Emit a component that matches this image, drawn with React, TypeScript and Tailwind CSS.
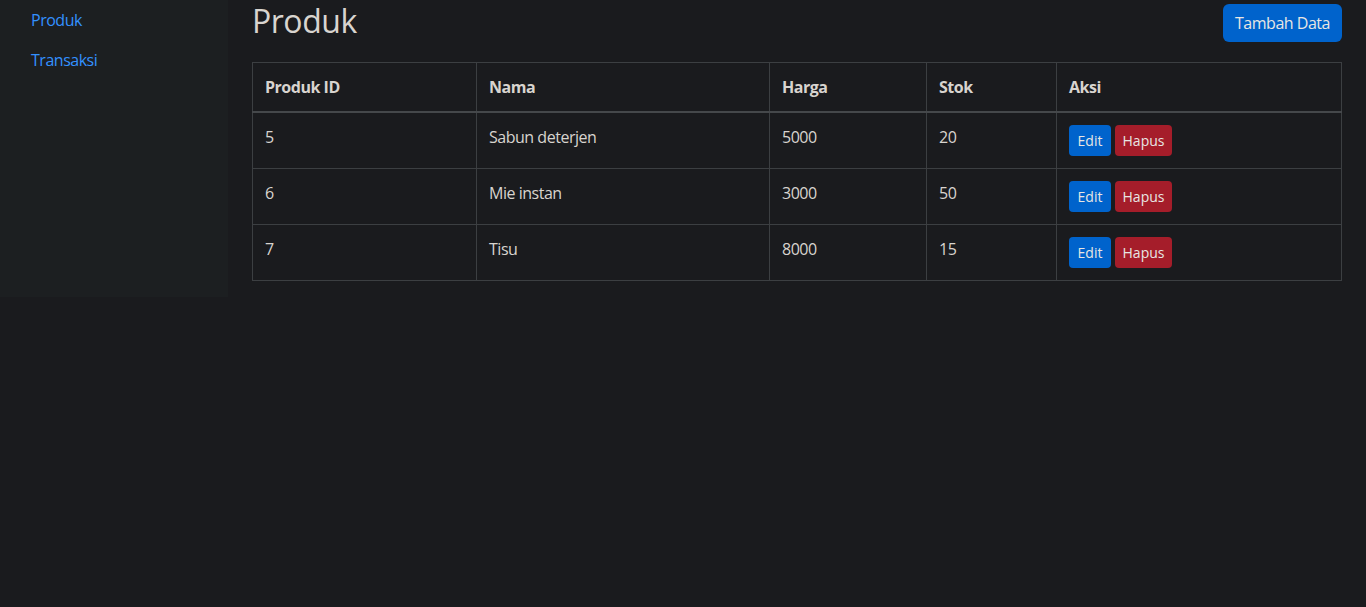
import { useState } from 'react';

type Produk = {
  id: number;
  nama: string;
  harga: number;
  stok: number;
};

const initialData: Produk[] = [
  { id: 5, nama: 'Sabun deterjen', harga: 5000, stok: 20 },
  { id: 6, nama: 'Mie instan', harga: 3000, stok: 50 },
  { id: 7, nama: 'Tisu', harga: 8000, stok: 15 },
];

function Sidebar() {
  return (
    <aside className="w-[228px] h-[297px] shrink-0 bg-[#1c1f21] px-[15px]">
      <nav className="flex flex-col">
        <a href="#" className="px-4 py-2 text-[#3391ff] leading-6">
          Produk
        </a>
        <a href="#" className="px-4 py-2 text-[#3391ff] leading-6">
          Transaksi
        </a>
      </nav>
    </aside>
  );
}

function App() {
  const [data] = useState<Produk[]>(initialData);

  return (
    <div
      className="min-h-screen bg-[#1a1b1e] text-[#d8d4cf] flex tracking-[-0.03em]"
      style={{ fontFamily: '"Open Sans", "Liberation Sans", sans-serif' }}
    >
      <Sidebar />

      <main className="flex-1 px-6">
        <div className="flex items-center justify-between pt-1">
          <h2 className="text-[32px] leading-[1.2] font-medium -mt-[3px]">Produk</h2>
          <button className="h-[38px] px-3 rounded-md bg-[#0063cc] text-[#e8e6e3] text-base">
            Tambah Data
          </button>
        </div>

        <table className="w-full mt-[20px] border-collapse border border-[#3c3f42] text-base">
          <thead>
            <tr className="border-b-2 border-[#45484b]">
              <th className="w-[224px] text-left font-bold p-3 leading-6 border border-[#3c3f42]">Produk ID</th>
              <th className="w-[293px] text-left font-bold p-3 leading-6 border border-[#3c3f42]">Nama</th>
              <th className="w-[157px] text-left font-bold p-3 leading-6 border border-[#3c3f42]">Harga</th>
              <th className="w-[130px] text-left font-bold p-3 leading-6 border border-[#3c3f42]">Stok</th>
              <th className="text-left font-bold p-3 leading-6 border border-[#3c3f42]">Aksi</th>
            </tr>
          </thead>
          <tbody>
            {data.map((p) => (
              <tr key={p.id} className="h-[56px]">
                <td className="p-3 align-top leading-6 border border-[#3c3f42]">{p.id}</td>
                <td className="p-3 align-top leading-6 border border-[#3c3f42]">{p.nama}</td>
                <td className="p-3 align-top leading-6 border border-[#3c3f42]">{p.harga}</td>
                <td className="p-3 align-top leading-6 border border-[#3c3f42]">{p.stok}</td>
                <td className="p-3 align-top leading-6 border border-[#3c3f42]">
                  <div className="flex gap-1 tracking-normal">
                    <button className="h-[31px] w-[42px] rounded-[4px] bg-[#0063cc] text-[#e8e6e3] text-sm">
                      Edit
                    </button>
                    <button className="h-[31px] w-[57px] rounded-[4px] bg-[#a51d2a] text-[#e8e6e3] text-sm">
                      Hapus
                    </button>
                  </div>
                </td>
              </tr>
            ))}
          </tbody>
        </table>
      </main>
    </div>
  );
}

export default App;
